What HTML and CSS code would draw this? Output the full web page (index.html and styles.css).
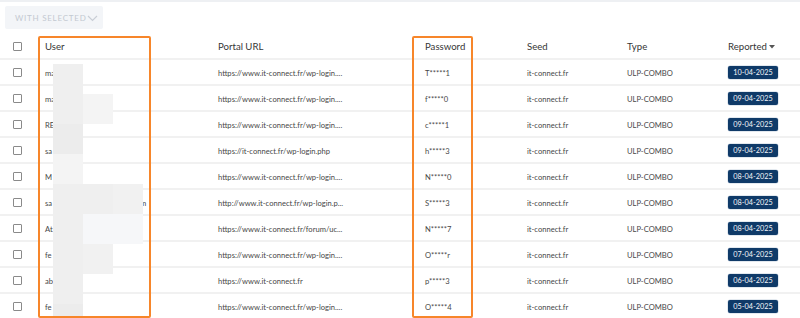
FILE: index.html
```html
<!DOCTYPE html>
<html>
<head>
<meta charset="utf-8">
<link rel="stylesheet" href="styles.css">
</head>
<body>
<div class="page">
  <div class="toolbar">
    <button class="bulk">WITH SELECTED<svg class="chev" width="11" height="7" viewBox="0 0 11 7"><path d="M1 1l4.5 4.5L10 1" fill="none" stroke="#c9ced6" stroke-width="1.2"/></svg></button>
  </div>
  <div class="table">
    <div class="row head">
      <div class="cell cb"><span class="box"></span></div>
      <div class="cell">User</div>
      <div class="cell">Portal URL</div>
      <div class="cell">Password</div>
      <div class="cell">Seed</div>
      <div class="cell">Type</div>
      <div class="cell">Reported<svg class="caret" width="6" height="4" viewBox="0 0 6 4"><path d="M0 0h6L3 3.6z" fill="#555"/></svg></div>
    </div>
    <div class="row"><div class="cell cb"><span class="box"></span></div><div class="cell">ma</div><div class="cell">https://www.it-connect.fr/wp-login....</div><div class="cell">T*****1</div><div class="cell">it-connect.fr</div><div class="cell">ULP-COMBO</div><div class="cell"><span class="badge">10-04-2025</span></div></div>
    <div class="row"><div class="cell cb"><span class="box"></span></div><div class="cell">ma</div><div class="cell">https://www.it-connect.fr/wp-login....</div><div class="cell">f*****0</div><div class="cell">it-connect.fr</div><div class="cell">ULP-COMBO</div><div class="cell"><span class="badge">09-04-2025</span></div></div>
    <div class="row"><div class="cell cb"><span class="box"></span></div><div class="cell">RE</div><div class="cell">https://www.it-connect.fr/wp-login....</div><div class="cell">c*****1</div><div class="cell">it-connect.fr</div><div class="cell">ULP-COMBO</div><div class="cell"><span class="badge">09-04-2025</span></div></div>
    <div class="row"><div class="cell cb"><span class="box"></span></div><div class="cell">sa</div><div class="cell">https://it-connect.fr/wp-login.php</div><div class="cell">h*****3</div><div class="cell">it-connect.fr</div><div class="cell">ULP-COMBO</div><div class="cell"><span class="badge">09-04-2025</span></div></div>
    <div class="row"><div class="cell cb"><span class="box"></span></div><div class="cell">M</div><div class="cell">https://www.it-connect.fr/wp-login....</div><div class="cell">N*****0</div><div class="cell">it-connect.fr</div><div class="cell">ULP-COMBO</div><div class="cell"><span class="badge">08-04-2025</span></div></div>
    <div class="row"><div class="cell cb"><span class="box"></span></div><div class="cell user-long">sa<span class="tail">m</span></div><div class="cell">http://www.it-connect.fr/wp-login.p...</div><div class="cell">S*****3</div><div class="cell">it-connect.fr</div><div class="cell">ULP-COMBO</div><div class="cell"><span class="badge">08-04-2025</span></div></div>
    <div class="row"><div class="cell cb"><span class="box"></span></div><div class="cell">At</div><div class="cell">https://www.it-connect.fr/forum/uc...</div><div class="cell">N*****7</div><div class="cell">it-connect.fr</div><div class="cell">ULP-COMBO</div><div class="cell"><span class="badge">08-04-2025</span></div></div>
    <div class="row"><div class="cell cb"><span class="box"></span></div><div class="cell">fe</div><div class="cell">https://www.it-connect.fr/wp-login....</div><div class="cell">O*****r</div><div class="cell">it-connect.fr</div><div class="cell">ULP-COMBO</div><div class="cell"><span class="badge">07-04-2025</span></div></div>
    <div class="row"><div class="cell cb"><span class="box"></span></div><div class="cell">ab</div><div class="cell">https://www.it-connect.fr</div><div class="cell">p*****3</div><div class="cell">it-connect.fr</div><div class="cell">ULP-COMBO</div><div class="cell"><span class="badge">06-04-2025</span></div></div>
    <div class="row"><div class="cell cb"><span class="box"></span></div><div class="cell">fe</div><div class="cell">https://www.it-connect.fr/wp-login....</div><div class="cell">O*****4</div><div class="cell">it-connect.fr</div><div class="cell">ULP-COMBO</div><div class="cell"><span class="badge">05-04-2025</span></div></div>
  </div>

  <div class="redact">
    <i class="px g1" style="left:53px;top:62px;height:30px"></i>
    <i class="px g1" style="left:53px;top:92px;height:30px"></i>
    <i class="px g3" style="left:83px;top:92px;height:30px"></i>
    <i class="px g0" style="left:53px;top:122px;height:30px"></i>
    <i class="px g3" style="left:53px;top:152px;height:30px"></i>
    <i class="px g1" style="left:53px;top:182px;height:30px"></i>
    <i class="px g1" style="left:83px;top:182px;height:30px"></i>
    <i class="px g2" style="left:113px;top:182px;height:30px"></i>
    <i class="px g1" style="left:53px;top:212px;height:30px"></i>
    <i class="px g4" style="left:83px;top:212px;height:30px"></i>
    <i class="px g4" style="left:113px;top:212px;height:30px"></i>
    <i class="px g1" style="left:53px;top:242px;height:30px"></i>
    <i class="px g2" style="left:83px;top:242px;height:30px"></i>
    <i class="px g1" style="left:53px;top:272px;height:30px"></i>
    <i class="px g0" style="left:53px;top:302px;height:16px"></i>
  </div>

  <div class="hl hl-user"></div>
  <div class="hl hl-pass"></div>
</div>
</body>
</html>
```
FILE: styles.css
```css
* { box-sizing: border-box; }
html, body { margin: 0; padding: 0; background: #fff; }
body {
  font-family: Lato, "Open Sans", "Liberation Sans", sans-serif;
  width: 800px;
  height: 318px;
  overflow: hidden;
}
.page {
  position: relative;
  width: 800px;
  height: 318px;
  border-top: 2px solid #eef0f3;
}
.toolbar {
  padding: 4px 0 0 5px;
  height: 32px;
}
.bulk {
  display: flex;
  align-items: center;
  gap: 0;
  width: 98px;
  height: 23px;
  padding: 0 0 0 10px;
  border: 0;
  border-radius: 2px;
  background: #f3f5f8;
  color: #c3c9d1;
  font-family: Lato, sans-serif;
  font-size: 8px;
  letter-spacing: 0.75px;
}
.chev { margin-top: 1px; }
.table { width: 800px; }
.row {
  display: grid;
  grid-template-columns: 38px 173px 207px 102px 100px 101px 79px;
  height: 26px;
  padding-top: 1px;
  border-bottom: 2px solid #f1f1f1;
  align-items: center;
  font-size: 7.6px;
  color: #474747;
}
.row.head {
  font-size: 9.6px;
  color: #363636;
}
.cell {
  padding-left: 7px;
  white-space: nowrap;
  display: flex;
  align-items: center;
}
.cell.cb { padding-left: 13px; }
.box {
  display: block;
  width: 9px;
  height: 9px;
  border: 1px solid #8a8a8a;
  border-radius: 1px;
  background: #fff;
}
.caret { margin-left: 2px; }
.tail { margin-left: 88px; }
.badge {
  display: inline-block;
  width: 50px;
  height: 13px;
  line-height: 13px;
  text-align: center;
  background: #0f3a68;
  color: #f4f6f9;
  font-size: 7.3px;
  border-radius: 2px;
  box-shadow: 0 0 0 0.5px #c8d3e0;
}
.redact { position: absolute; left: 0; top: 0; }
.px { position: absolute; width: 30px; display: block; }
.g0 { background: #ececec; }
.g1 { background: #efefef; }
.g2 { background: #f1f1f1; }
.g3 { background: #f4f4f4; }
.g4 { background: #f6f7f9; }
.hl {
  position: absolute;
  top: 34px;
  height: 282px;
  border: 2.5px solid #f7862a;
  border-radius: 2px;
}
.hl-user { left: 38px; width: 113px; }
.hl-pass { left: 412px; width: 61px; }
```
